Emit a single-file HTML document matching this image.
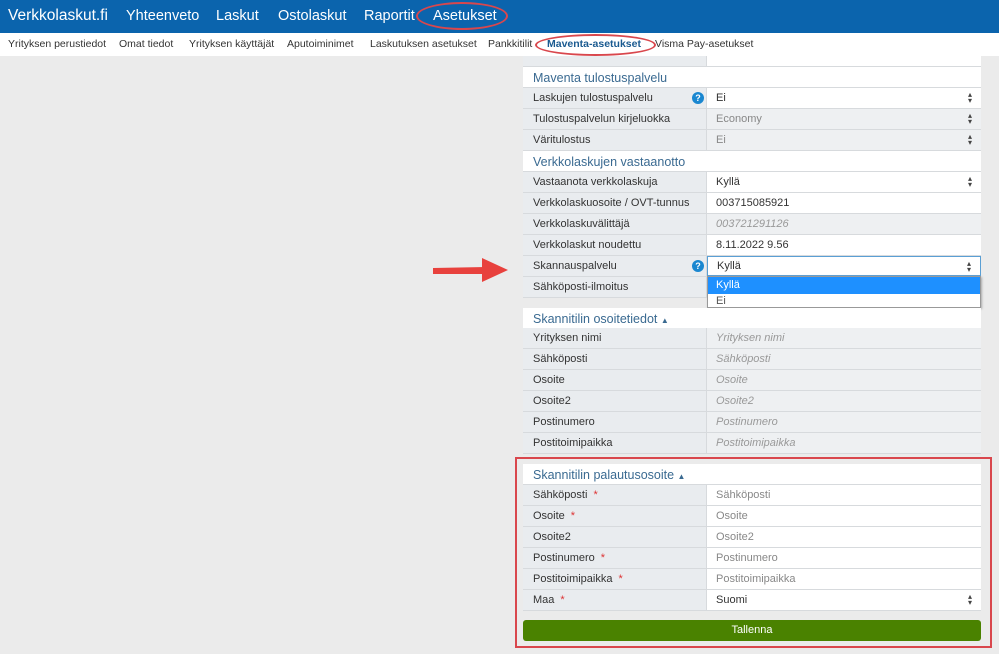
<!DOCTYPE html>
<html><head><meta charset="utf-8"><style>
*{box-sizing:border-box;margin:0;padding:0}
body{width:999px;height:654px;background:#ebebeb;font-family:"Liberation Sans",sans-serif;position:relative;overflow:hidden;color:#333}
.top{position:absolute;left:0;top:0;width:999px;height:33px;background:#0b64ad}
.top span{position:absolute;top:8px;color:#fff;font-size:14.5px}
.sub{position:absolute;left:0;top:33px;width:999px;height:23px;background:#fff}
.sub span{position:absolute;top:5px;font-size:10.5px;color:#333}
.r{position:absolute;left:523px;width:458px;height:21px;font-size:11px;border-bottom:1px solid #d7dadd}
.r .l{position:absolute;left:0;top:0;width:184px;height:20px;background:#e9ecef;padding:4px 0 0 10px;border-right:1px solid #d7dadd}
.r .v{position:absolute;left:184px;top:0;width:274px;height:20px;background:#fff;padding:4px 0 0 9px}
.r .v.g{background:#eef0f2;color:#888}
.r .v.i{font-style:italic;color:#999}
.r .v.p{color:#888}
.h{position:absolute;left:523px;width:458px;height:21px;background:#fff;color:#3a6a91;font-size:12.5px;padding:4px 0 0 10px;border-bottom:1px solid #d7dadd}
.ar{position:absolute;right:9px;top:4px;font-size:8px;color:#444;line-height:6px}
.q{position:absolute;left:169px;top:4px;width:12px;height:12px;border-radius:50%;background:#1a87d0;color:#fff;font-size:9px;font-weight:bold;text-align:center;line-height:12px}
.st{color:#d33;margin-left:6px}
</style></head><body>
<div class="top">
<span style="left:8px;font-size:15.5px;top:7px">Verkkolaskut.fi</span>
<span style="left:126px">Yhteenveto</span>
<span style="left:216px">Laskut</span>
<span style="left:278px">Ostolaskut</span>
<span style="left:364px">Raportit</span>
<span style="left:433px">Asetukset</span>
<div style="position:absolute;left:416px;top:2px;width:92px;height:28px;border:2px solid #d9474d;border-radius:50%"></div>
</div>
<div class="sub">
<span style="left:8px">Yrityksen perustiedot</span>
<span style="left:119px">Omat tiedot</span>
<span style="left:189px">Yrityksen käyttäjät</span>
<span style="left:287px">Aputoiminimet</span>
<span style="left:370px">Laskutuksen asetukset</span>
<span style="left:488px">Pankkitilit</span>
<span style="left:547px;color:#1a5a90;font-weight:bold">Maventa-asetukset</span>
<span style="left:655px">Visma Pay-asetukset</span>
<div style="position:absolute;left:535px;top:1px;width:121px;height:22px;border:2px solid #d9474d;border-radius:50%"></div>
</div>
<div class="r" style="top:56px;height:11px"><div class="l" style="height:10px"></div><div class="v" style="height:10px"></div></div>
<div class="h" style="top:67px">Maventa tulostuspalvelu</div>
<div class="r" style="top:88px"><div class="l">Laskujen tulostuspalvelu<div class="q">?</div></div><div class="v">Ei<div class="ar">▴<br>▾</div></div></div>
<div class="r" style="top:109px"><div class="l">Tulostuspalvelun kirjeluokka</div><div class="v g">Economy<div class="ar">▴<br>▾</div></div></div>
<div class="r" style="top:130px"><div class="l">Väritulostus</div><div class="v g">Ei<div class="ar">▴<br>▾</div></div></div>
<div class="h" style="top:151px">Verkkolaskujen vastaanotto</div>
<div class="r" style="top:172px"><div class="l">Vastaanota verkkolaskuja</div><div class="v">Kyllä<div class="ar">▴<br>▾</div></div></div>
<div class="r" style="top:193px"><div class="l">Verkkolaskuosoite / OVT-tunnus</div><div class="v">003715085921</div></div>
<div class="r" style="top:214px"><div class="l">Verkkolaskuvälittäjä</div><div class="v g i">003721291126</div></div>
<div class="r" style="top:235px"><div class="l">Verkkolaskut noudettu</div><div class="v">8.11.2022 9.56</div></div>
<div class="r" style="top:256px"><div class="l">Skannauspalvelu<div class="q">?</div></div><div class="v" style="border:1px solid #5a9fd4;left:184px;padding-top:3px">Kyllä<div class="ar">▴<br>▾</div></div></div>
<div class="r" style="top:277px"><div class="l">Sähköposti-ilmoitus</div><div class="v"></div></div>
<div style="position:absolute;left:523px;top:298px;width:458px;height:10px;background:#ebebeb"></div>
<div style="position:absolute;left:707px;top:276px;width:274px;height:32px;background:#fff;border:1px solid #999;box-shadow:1px 1px 2px #aaa;font-size:11px">
<div style="height:17px;background:#1e90ff;color:#fff;padding:2px 0 0 8px">Kyllä</div>
<div style="padding:1px 0 0 8px;color:#555">Ei</div></div>
<svg style="position:absolute;left:430px;top:255px" width="80" height="30"><path d="M3 13 L56 12 L56 19 L3 19Z" fill="#e8413d"/><path d="M52 3 L78 15 L52 27Z" fill="#e8413d"/></svg>
<div class="h" style="top:308px">Skannitilin osoitetiedot <span style="font-size:8px">▲</span></div>
<div class="r" style="top:328px"><div class="l">Yrityksen nimi</div><div class="v g i">Yrityksen nimi</div></div>
<div class="r" style="top:349px"><div class="l">Sähköposti</div><div class="v g i">Sähköposti</div></div>
<div class="r" style="top:370px"><div class="l">Osoite</div><div class="v g i">Osoite</div></div>
<div class="r" style="top:391px"><div class="l">Osoite2</div><div class="v g i">Osoite2</div></div>
<div class="r" style="top:412px"><div class="l">Postinumero</div><div class="v g i">Postinumero</div></div>
<div class="r" style="top:433px"><div class="l">Postitoimipaikka</div><div class="v g i">Postitoimipaikka</div></div>
<div class="h" style="top:464px">Skannitilin palautusosoite <span style="font-size:8px">▲</span></div>
<div class="r" style="top:485px"><div class="l">Sähköposti<span class="st">*</span></div><div class="v p">Sähköposti</div></div>
<div class="r" style="top:506px"><div class="l">Osoite<span class="st">*</span></div><div class="v p">Osoite</div></div>
<div class="r" style="top:527px"><div class="l">Osoite2</div><div class="v p">Osoite2</div></div>
<div class="r" style="top:548px"><div class="l">Postinumero<span class="st">*</span></div><div class="v p">Postinumero</div></div>
<div class="r" style="top:569px"><div class="l">Postitoimipaikka<span class="st">*</span></div><div class="v p">Postitoimipaikka</div></div>
<div class="r" style="top:590px"><div class="l">Maa<span class="st">*</span></div><div class="v">Suomi<div class="ar">▴<br>▾</div></div></div>
<div style="position:absolute;left:523px;top:620px;width:458px;height:21px;background:#4a8200;border-radius:3px;color:#fff;font-size:11px;text-align:center;padding-top:4px">Tallenna</div>
<div style="position:absolute;left:515px;top:457px;width:477px;height:191px;border:2px solid #d9474d"></div>
</body></html>
